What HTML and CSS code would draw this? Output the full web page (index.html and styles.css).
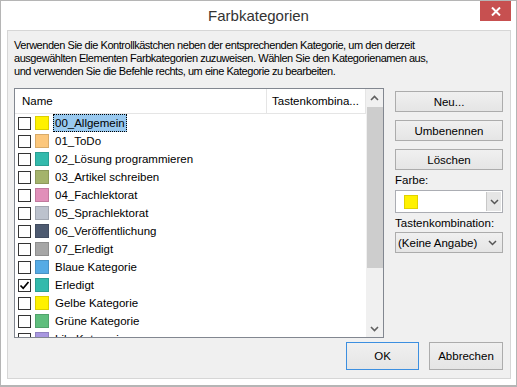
FILE: index.html
```html
<!DOCTYPE html>
<html lang="de">
<head>
<meta charset="utf-8">
<title>Farbkategorien</title>
<link rel="stylesheet" href="styles.css">
</head>
<body>
<div class="window">
  <div class="titlebar">
    <div></div>
    <div class="title">Farbkategorien</div>
    <div class="close"><svg width="10" height="9" viewBox="0 0 10 9"><path d="M1 0.5 L9 8.5 M9 0.5 L1 8.5" stroke="#fff" stroke-width="2"/></svg></div>
  </div>
  <div class="panel">
    <p class="intro">Verwenden Sie die Kontrollkästchen neben der entsprechenden Kategorie, um den derzeit<br>ausgewählten Elementen Farbkategorien zuzuweisen. Wählen Sie den Kategorienamen aus,<br>und verwenden Sie die Befehle rechts, um eine Kategorie zu bearbeiten.</p>
    <div class="main">
      <div class="list">
        <div class="list-body">
          <div class="header">
            <div class="col-name">Name</div>
            <div class="col-key">Tastenkombina...</div>
          </div>
          <div class="row"><span class="cb"></span><span class="sw c-yellow"></span><span class="lbl selected">00_Allgemein</span></div>
          <div class="row"><span class="cb"></span><span class="sw c-orange"></span><span class="lbl">01_ToDo</span></div>
          <div class="row"><span class="cb"></span><span class="sw c-teal"></span><span class="lbl">02_Lösung programmieren</span></div>
          <div class="row"><span class="cb"></span><span class="sw c-olive"></span><span class="lbl">03_Artikel schreiben</span></div>
          <div class="row"><span class="cb"></span><span class="sw c-pink"></span><span class="lbl">04_Fachlektorat</span></div>
          <div class="row"><span class="cb"></span><span class="sw c-steel"></span><span class="lbl">05_Sprachlektorat</span></div>
          <div class="row"><span class="cb"></span><span class="sw c-slate"></span><span class="lbl">06_Veröffentlichung</span></div>
          <div class="row"><span class="cb"></span><span class="sw c-gray"></span><span class="lbl">07_Erledigt</span></div>
          <div class="row"><span class="cb"></span><span class="sw c-blue"></span><span class="lbl">Blaue Kategorie</span></div>
          <div class="row"><span class="cb"><svg width="11" height="11" viewBox="0 0 11 11"><path d="M1.5 5.5 L4.2 8.3 L9.5 2" fill="none" stroke="#000" stroke-width="1.7"/></svg></span><span class="sw c-teal"></span><span class="lbl">Erledigt</span></div>
          <div class="row"><span class="cb"></span><span class="sw c-yellow"></span><span class="lbl">Gelbe Kategorie</span></div>
          <div class="row"><span class="cb"></span><span class="sw c-green"></span><span class="lbl">Grüne Kategorie</span></div>
          <div class="row"><span class="cb"></span><span class="sw c-purple"></span><span class="lbl">Lila Kategorie</span></div>
        </div>
        <div class="scrollbar">
          <div class="sb-btn"><svg width="9" height="6" viewBox="0 0 9 6"><path d="M1 5 L4.5 1.5 L8 5" fill="none" stroke="#606060" stroke-width="1.6"/></svg></div>
          <div class="sb-thumb"></div>
          <div class="sb-track"></div>
          <div class="sb-btn"><svg width="9" height="6" viewBox="0 0 9 6"><path d="M1 1 L4.5 4.5 L8 1" fill="none" stroke="#606060" stroke-width="1.6"/></svg></div>
        </div>
      </div>
      <div class="side">
        <div class="btn side-btn">Neu...</div>
        <div class="btn side-btn">Umbenennen</div>
        <div class="btn side-btn">Löschen</div>
        <div class="label">Farbe:</div>
        <div class="combo">
          <span class="combo-value"><span class="sw c-yellow"></span></span>
          <span class="combo-arrow"><svg width="9" height="6" viewBox="0 0 9 6"><path d="M1 1 L4.5 4.5 L8 1" fill="none" stroke="#555" stroke-width="1.5"/></svg></span>
        </div>
        <div class="label label-key">Tastenkombination:</div>
        <div class="dropdown">
          <span>(Keine Angabe)</span>
          <svg width="9" height="6" viewBox="0 0 9 6"><path d="M1 1 L4.5 4.5 L8 1" fill="none" stroke="#555" stroke-width="1.5"/></svg>
        </div>
      </div>
    </div>
    <div class="footer">
      <div class="btn dlg-btn default">OK</div>
      <div class="btn dlg-btn">Abbrechen</div>
    </div>
  </div>
</div>
</body>
</html>
```
FILE: styles.css
```css
* { box-sizing: border-box; }
html, body { margin: 0; padding: 0; background: #fff; }
body { font-family: "Liberation Sans", Arial, sans-serif; font-size: 11.5px; color: #000; }

.window {
  width: 517px;
  height: 387px;
  background: #fff;
  border: 1px solid #b5b5b5;
  border-bottom-width: 2px;
  display: flex;
  flex-direction: column;
}

.titlebar {
  height: 29px;
  display: grid;
  grid-template-columns: 1fr auto 1fr;
}
.title {
  font-size: 15px;
  line-height: 29px;
  color: #333;
}
.close {
  justify-self: end;
  align-self: start;
  width: 31px;
  height: 20px;
  margin-right: 5px;
  background: #c75050;
  display: flex;
  align-items: center;
  justify-content: center;
}

.panel {
  margin: 0 5px 6px 6px;
  height: 349px;
  background: #f0f0f0;
  border: 1px solid #d6d6d6;
  padding: 8px 7px 0 6px;
}

.intro {
  margin: 0 0 10px 0;
  font-size: 11px;
  letter-spacing: -0.46px;
  line-height: 13px;
  white-space: nowrap;
}

.main {
  display: flex;
  gap: 11px;
  height: 250px;
}

.list {
  width: 370px;
  height: 250px;
  border: 1px solid #828790;
  background: #fff;
  display: grid;
  grid-template-columns: 1fr 17px;
}
.list-body { overflow: hidden; }

.header {
  height: 25px;
  display: grid;
  grid-template-columns: 252px 1fr;
  border-bottom: 1px solid #e5e5e5;
}
.col-name, .col-key {
  line-height: 24px;
  white-space: nowrap;
  overflow: hidden;
}
.col-name { padding-left: 7px; border-right: 1px solid #e5e5e5; }
.col-key { padding-left: 5px; border-right: 1px solid #e5e5e5; }

.row {
  height: 18px;
  display: flex;
  align-items: center;
  padding-left: 3px;
  white-space: nowrap;
}
.cb {
  width: 13px;
  height: 13px;
  border: 1px solid #333;
  background: #fff;
  margin-right: 4px;
  display: flex;
  align-items: center;
  justify-content: center;
  flex: none;
}
.sw {
  width: 14px;
  height: 14px;
  border: 1px solid rgba(0, 0, 0, 0.14);
  margin-right: 4px;
  flex: none;
}
.lbl {
  height: 18px;
  line-height: 16px;
  padding: 0 1px;
  border: 1px dotted transparent;
}
.lbl.selected {
  background: #99c9ef;
  border-color: #000;
}

.c-yellow { background-color: #fff100; }
.c-orange { background-color: #fcc77b; }
.c-teal { background-color: #33baac; }
.c-olive { background-color: #a4b36b; }
.c-pink { background-color: #e18fb9; }
.c-steel { background-color: #bcc2cd; }
.c-slate { background-color: #4d5a70; }
.c-gray { background-color: #a6a6a6; }
.c-blue { background-color: #55abe5; }
.c-green { background-color: #5fbe7d; }
.c-purple { background-color: #a897e0; }

.scrollbar {
  background: #f0f0f0;
  display: flex;
  flex-direction: column;
}
.sb-btn {
  height: 17px;
  display: flex;
  align-items: center;
  justify-content: center;
  flex: none;
}
.sb-thumb {
  height: 161px;
  margin: 1px 0 0 1px;
  background: #cdcdcd;
  flex: none;
}
.sb-track { flex: 1; }

.side {
  width: 108px;
  display: flex;
  flex-direction: column;
  padding-top: 3px;
}
.btn {
  border: 1px solid #acacac;
  background: linear-gradient(#f0f0f0, #e5e5e5);
  display: flex;
  align-items: center;
  justify-content: center;
  white-space: nowrap;
}
.side-btn { height: 21px; margin-bottom: 8px; }
.side-btn:nth-of-type(3) { margin-bottom: 3px; }
.label { line-height: 14px; margin-bottom: 3px; }
.label-key { margin-top: 3px; margin-bottom: 2px; }

.combo {
  height: 23px;
  border: 1px solid #abadb3;
  background: #fff;
  display: flex;
}
.combo-value {
  flex: 1;
  display: flex;
  align-items: center;
  padding-left: 8px;
}
.combo-value .sw { border-color: #e0d200; }
.combo-arrow {
  width: 15px;
  margin: 1px 1px 1px 0;
  background: #e6e6e6;
  border-left: 1px solid #c8c8c8;
  display: flex;
  align-items: center;
  justify-content: center;
}

.dropdown {
  height: 21px;
  border: 1px solid #acacac;
  background: linear-gradient(#f0f0f0, #e5e5e5);
  display: flex;
  align-items: center;
  justify-content: space-between;
  padding: 0 5px 0 2px;
  white-space: nowrap;
}

.footer {
  margin-top: 4px;
  display: flex;
  justify-content: flex-end;
  gap: 10px;
}
.dlg-btn { width: 74px; height: 28px; }
.dlg-btn.default { width: 73px; border-color: #3c8fe0; }
```
